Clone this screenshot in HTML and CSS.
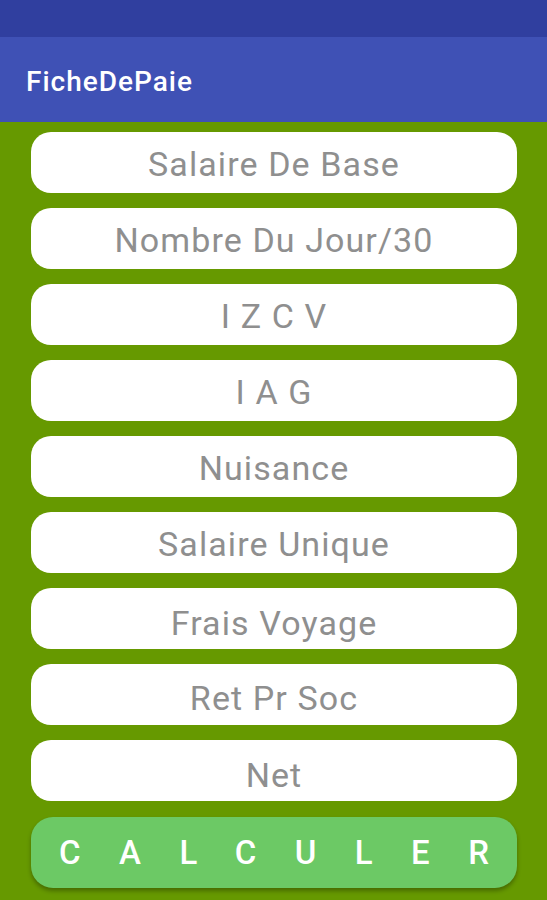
FILE: index.html
```html
<!DOCTYPE html>
<html lang="fr">
<head>
    <meta charset="UTF-8">
    <meta name="viewport" content="width=device-width, initial-scale=1.0">
    <title>FicheDePaie</title>
    <link rel="stylesheet" href="styles.css">
</head>
<body>
<div class="status-bar"></div>
<div class="app-bar">FicheDePaie</div>

<div class="form">
    <input class="field" type="text" placeholder="Salaire De Base">
    <input class="field" type="text" placeholder="Nombre Du Jour/30">
    <input class="field" type="text" placeholder="I Z C V">
    <input class="field" type="text" placeholder="I A G">
    <input class="field" type="text" placeholder="Nuisance">
    <input class="field" type="text" placeholder="Salaire Unique">
    <input class="field low" type="text" placeholder="Frais Voyage">
    <input class="field mid" type="text" placeholder="Ret Pr Soc">
    <input class="field low" type="text" placeholder="Net">
    <button class="calc-button"><span class="calc-label">CALCULER</span></button>
</div>
</body>
</html>
```

FILE: styles.css
```css
/* Основные стили */
body {
    font-family: Roboto, "Noto Sans", sans-serif;
    background-color: #669900;
    margin: 0;
    padding: 0;
    height: 900px;
    overflow: hidden;
}

.status-bar {
    height: 37px;
    background-color: #303f9f;
}

.app-bar {
    height: 85px;
    background-color: #3f51b5;
    color: #fff;
    font-size: 28px;
    font-weight: 500;
    letter-spacing: 1px;
    padding: 4px 0 0 26px;
    display: flex;
    align-items: center;
    box-sizing: border-box;
}

.form {
    display: flex;
    flex-direction: column;
    gap: 15px;
    padding: 10px 30px 0 31px;
}

.field {
    height: 61px;
    box-sizing: border-box;
    border: none;
    border-radius: 20px;
    background-color: #fff;
    font-family: Roboto, sans-serif;
    font-size: 34px;
    letter-spacing: 1.1px;
    color: #333;
    text-align: center;
    padding: 2px 10px 0;
    outline: none;
}

/* текст в некоторых полях сидит чуть ниже */
.field.mid {
    padding-top: 6px;
}

.field.low {
    padding-top: 9px;
}

.field::placeholder {
    color: #8f8f8f;
}

.calc-button {
    height: 71px;
    margin-top: 1px;
    border: none;
    border-radius: 22px;
    background-color: #6cc965;
    color: #fff;
    font-family: Roboto, sans-serif;
    font-size: 33px;
    font-weight: 500;
    box-shadow: 0 3px 4px rgba(0, 0, 0, 0.3);
    cursor: pointer;
    padding: 0;
}

.calc-label {
    letter-spacing: 38.5px;
    margin-right: -38.5px;
}
```
